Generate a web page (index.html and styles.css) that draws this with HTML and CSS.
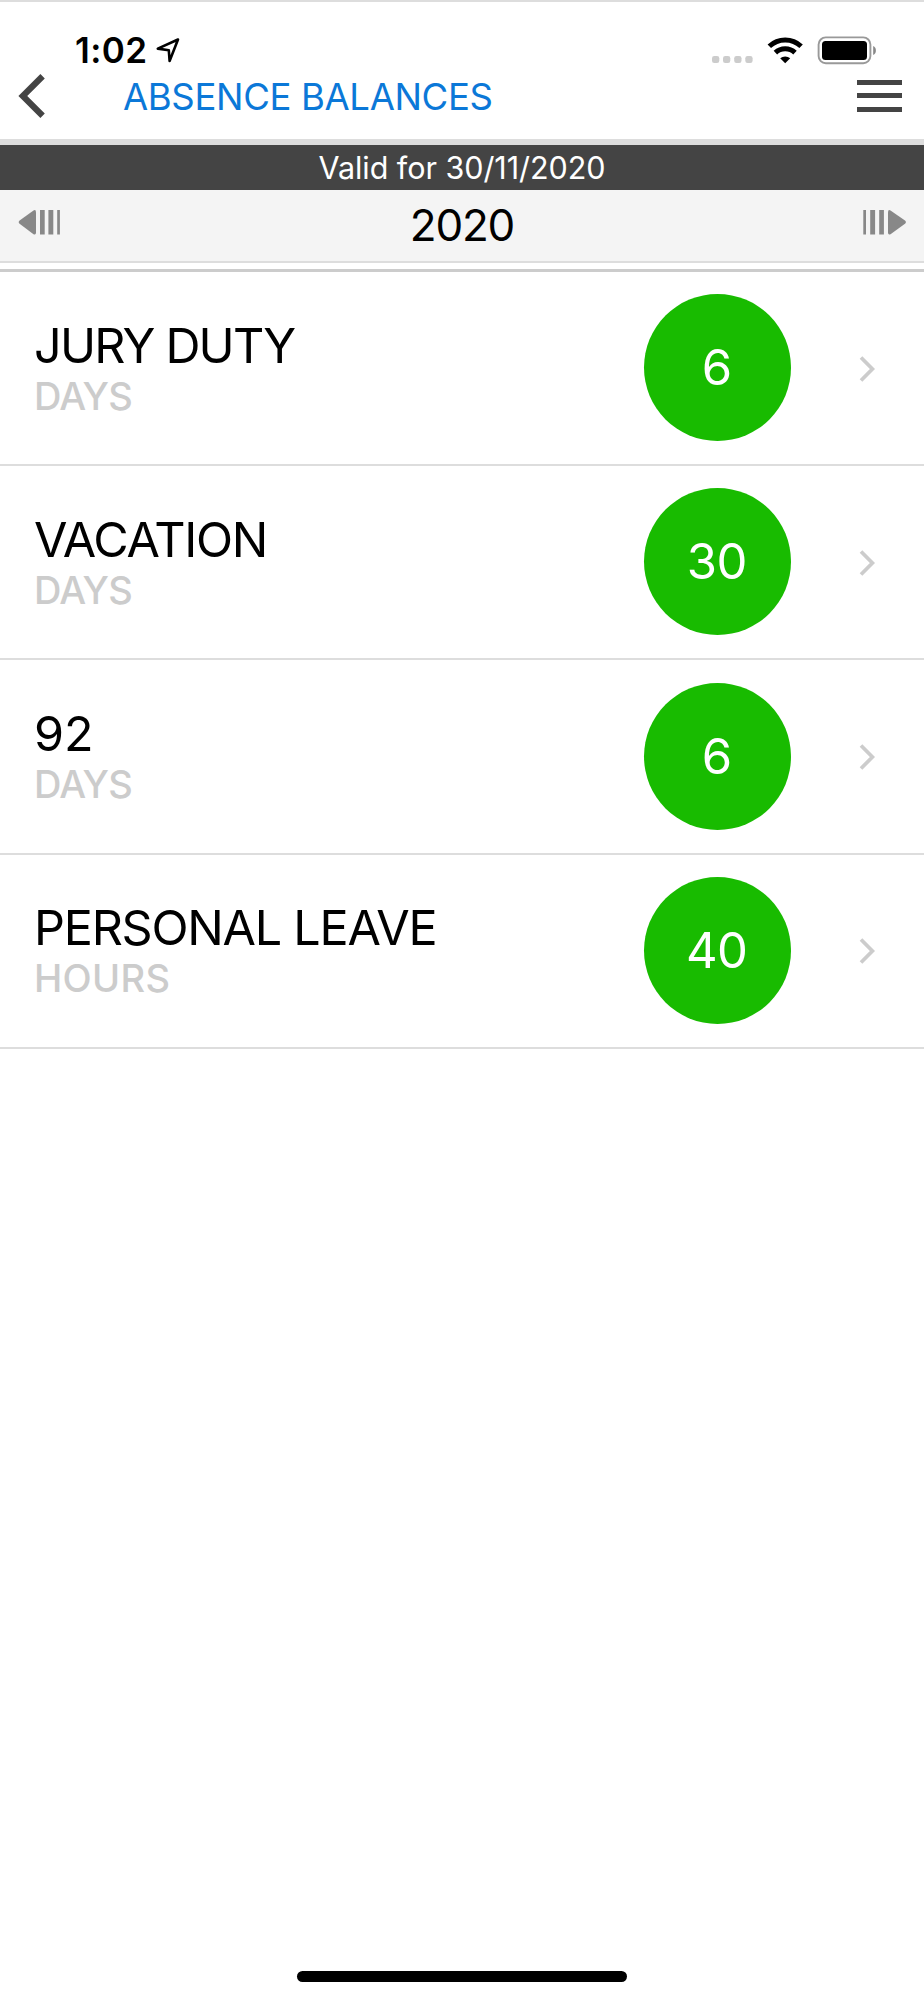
FILE: index.html
```html
<!DOCTYPE html>
<html lang="en">
<head>
<meta charset="utf-8">
<title>Absence Balances</title>
<link rel="stylesheet" href="styles.css">
</head>
<body>
<div class="screen">
  <header class="header">
    <div class="status">
      <span class="time">1:02</span>
      <svg class="location" width="26" height="28" viewBox="155 36 26 28"><path d="M178 39.5 157.8 48.6 168.8 50.2 169.6 61Z" fill="none" stroke="#000" stroke-width="2.6" stroke-linejoin="round"/></svg>
      <svg class="indicators" width="168" height="30" viewBox="710 35 168 30">
        <g fill="#ccc"><rect x="712" y="56" width="7.3" height="7" rx="2.3"/><rect x="723" y="56" width="7.3" height="7" rx="2.3"/><rect x="734.2" y="56" width="7.3" height="7" rx="2.3"/><rect x="745.3" y="56" width="7.3" height="7" rx="2.3"/></g>
        <g fill="none" stroke="#000" stroke-width="5"><path d="M769.3 46.2a23.2 23.2 0 0 1 31.8 0"/><path d="M775.4 52.6a14.2 14.2 0 0 1 19.6 0"/></g>
        <path d="M780.2 58.3a7.6 7.6 0 0 1 10 0L785.2 63.3Z"/>
        <rect x="818.6" y="37.4" width="51.8" height="25.8" rx="7.2" fill="none" stroke="#999" stroke-width="1.9"/>
        <rect x="822" y="41" width="45" height="19" rx="3.5"/>
        <path d="M873.2 46c3.6 1.5 3.6 7.5 0 9Z" fill="#888"/>
      </svg>
    </div>
    <nav class="nav">
      <svg class="back" width="30" height="48" viewBox="16 72 30 48"><path d="M42.6 76.2 22.8 96 42.6 115.8" fill="none" stroke="#444" stroke-width="6.2"/></svg>
      <h1 class="title">ABSENCE BALANCES</h1>
      <div class="menu"><i></i><i></i><i></i></div>
    </nav>
  </header>
  <div class="valid"><span>Valid for 30/11/2020</span></div>
  <div class="year-bar">
    <svg width="44" height="28" viewBox="18 208 44 28" fill="#888"><path d="M36 212.2V232.5Q36 235.3 33.5 234.2L19.6 223.8Q17.8 222.2 19.6 220.6L33.5 210.4Q36 209.3 36 212.2Z"/><path d="M40 210h4.700v24.500H40ZM48.400 210h4.900v24.500h-4.900ZM57.200 210h2.700v24.500h-2.700Z"/></svg>
    <span class="year">2020</span>
    <svg width="44" height="28" viewBox="862 208 44 28" fill="#888"><path d="M888 212.2V232.5Q888 235.3 890.5 234.2L905 223.8Q906.8 222.2 905 220.6L890.5 210.4Q888 209.3 888 212.2Z"/><path d="M863.300 210h2.700v24.500h-2.700ZM870.200 210h4.900v24.500h-4.900ZM879.200 210h4.700v24.500h-4.700Z"/></svg>
  </div>
  <div class="divider"></div>
  <main class="list">
    <div class="row"><div class="info"><span class="name jury">JURY DUTY</span><span class="unit">DAYS</span></div><div class="badge">6</div><svg class="chev" width="18" height="28"><path d="M3 2.500 14.400 14 3 25.500"/></svg></div>
    <div class="row"><div class="info"><span class="name vacation">VACATION</span><span class="unit">DAYS</span></div><div class="badge">30</div><svg class="chev" width="18" height="28"><path d="M3 2.500 14.400 14 3 25.500"/></svg></div>
    <div class="row"><div class="info"><span class="name number">92</span><span class="unit">DAYS</span></div><div class="badge">6</div><svg class="chev" width="18" height="28"><path d="M3 2.500 14.400 14 3 25.500"/></svg></div>
    <div class="row"><div class="info"><span class="name personal">PERSONAL LEAVE</span><span class="unit hours">HOURS</span></div><div class="badge">40</div><svg class="chev" width="18" height="28"><path d="M3 2.500 14.400 14 3 25.500"/></svg></div>
  </main>
  <div class="home-indicator"></div>
</div>
</body>
</html>
```

FILE: styles.css
```css
* { box-sizing: border-box; }
body { margin: 0; background: #fff; font-family: Inter, "Liberation Sans", sans-serif; color: #000; }
.screen { width: 924px; height: 2000px; display: flex; flex-direction: column; overflow: hidden; white-space: nowrap; }
.screen svg { display: block; flex: none; }
.header { height: 145px; flex: none; border-top: 2px solid #ddd; border-bottom: 6px solid #ddd; }
.status { height: 69px; display: flex; align-items: flex-start; padding: 33px 46px 0 75px; }
.time { width: 80px; height: 30px; line-height: 30px; font-size: 35px; font-weight: 600; letter-spacing: 0.4px; }
.location { margin-top: 1px; }
.indicators { margin-left: auto; }
.nav { height: 68px; display: flex; align-items: flex-start; padding: 1px 22px 0 16px; }
.title { margin: 0 0 0 77px; font-size: 36.5px; font-weight: 400; line-height: 50px; color: #0b78d8; letter-spacing: -0.35px; }
.menu { width: 45px; margin: 8px 0 0 auto; display: flex; flex-direction: column; gap: 8.7px; }
.menu i { height: 4.8px; background: #444; }
.valid { height: 45px; flex: none; background: #444; color: #fff; text-align: center; font-size: 30.5px; line-height: 45px; letter-spacing: -0.05px; }
.year-bar { height: 73px; flex: none; display: flex; justify-content: space-between; align-items: flex-start; padding: 18px 18px 0; background: #f4f4f4; border-bottom: 2px solid #ddd; }
.year { font-size: 44px; line-height: 34px; letter-spacing: -1.2px; }
.divider { height: 9px; flex: none; border-bottom: 3px solid #ccc; }
.list { flex: 1; }
.row { height: 194.2px; display: flex; align-items: flex-start; border-bottom: 2px solid #ddd; padding: 22.3px 48px 0 34px; }
.info { width: 610px; display: flex; flex-direction: column; padding-top: 21.5px; }
.name { font-size: 48.5px; line-height: 60px; margin-bottom: -2px; }
.jury { letter-spacing: -1.8px; }
.vacation { letter-spacing: -1.35px; }
.number { letter-spacing: 0; }
.personal { letter-spacing: -1.25px; }
.unit { font-size: 38px; line-height: 44px; color: #ccc; font-weight: 500; letter-spacing: -0.8px; }
.hours { letter-spacing: 0.3px; }
.badge { width: 147px; height: 147px; flex: none; border-radius: 50%; background: #18bb00; color: #fff; text-align: center; font-size: 49px; line-height: 147px; letter-spacing: -0.5px; padding-right: 1.5px; }
.chev { margin: 60.5px 0 0 67px; fill: none; stroke: #ccc; stroke-width: 3.7; }
.home-indicator { width: 330px; height: 11px; flex: none; align-self: center; border-radius: 6px; background: #000; margin: 0 0 18px; }
```
